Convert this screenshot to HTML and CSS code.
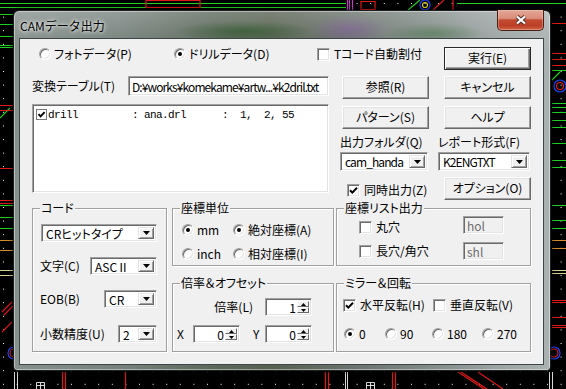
FILE: index.html
```html
<!DOCTYPE html>
<html lang="ja">
<head>
<meta charset="utf-8">
<title>CAMデータ出力</title>
<link rel="stylesheet" href="styles.css">
</head>
<body>
<div class="desktop">
  <svg class="pcb" width="566" height="389" viewBox="0 0 566 389">
    <defs>
      <pattern id="dots" width="13.6" height="13.6" patternUnits="userSpaceOnUse" x="3" y="3">
        <rect width="1" height="1" fill="#ffffff"/>
      </pattern>
    </defs>
    <rect width="566" height="389" fill="#000"/>
    <rect width="566" height="389" fill="url(#dots)"/>
    <g stroke="#22d022" stroke-width="1.2" fill="none">
      <path d="M0 3.5H346M0 7.5H346M0 14.5H13M0 24.5H13M0 36.5H13M0 45.5H13M0 47.5H13M0 205.5H13M0 217.5H13M0 228.5H13"/>
      <path d="M552 70.5H566M552 103.5H566M552 107.5H566M552 112.5H566M552 120.5H566M552 127.5H566M552 143.5H566M552 160.5H566M552 167.5H566M552 205.5H566M552 220.5H566M552 228.5H566M457 3.5H566"/>
      <path d="M408 10L420 0M0 118L10 108M552 80L560 72"/>
    </g>
    <g stroke="#e01818" stroke-width="1.2" fill="none">
      <path d="M552 23.5H566M552 53.5H566M552 59.5H566M552 65.5H566M552 300.5H566M552 302.5H566M552 317.5H566M552 325.5H566M552 327.5H566"/>
      <path d="M0 105.5H13M0 110.5H13M0 168.5H13M0 200.5H13M0 203.5H13"/>
      <path d="M146 0.5H200V7.5H146ZM433 10L444 0M453 0V10M361 1.5H375V9.5H361Z"/>
      <path d="M2 312L12 302M2 332L12 322M4 315L13 306"/>
      <path d="M62.5 372V389M65.5 372V389M125.5 372V389M325.5 372V389M328.5 372V389M392.5 372V389M395.5 372V389"/>
      <path d="M458 372L484 389M478 372L503 389M461 372L487 389"/>
    </g>
    <g stroke="#d68a2a" stroke-width="1.2"><path d="M0 240.5H13M0 250.5H13M552 240.5H566M552 248.5H566"/></g>
    <g stroke="#d8d098" stroke-width="1.2"><path d="M0 270.5H13M0 275.5H13M552 270.5H566M552 273.5H566"/></g>
    <g stroke="#c040c0" stroke-width="1.2"><path d="M347.5 0V10M349.5 0V10M352.5 0V10"/></g>
    <g fill="none" stroke-width="1.2">
      <circle cx="425" cy="5" r="5" stroke="#2244ff"/>
      <circle cx="425" cy="5" r="2.5" stroke="#e0d020"/>
      <circle cx="560" cy="86" r="6" stroke="#2244ff"/>
      <circle cx="560" cy="86" r="3.5" stroke="#e02020"/>
      <circle cx="14" cy="353" r="6" stroke="#2244ff"/>
      <circle cx="14" cy="353" r="4" stroke="#e02020"/>
      <circle cx="554" cy="353" r="6" stroke="#2244ff"/>
      <circle cx="554" cy="353" r="4" stroke="#e02020"/>
    </g>
    <g stroke="#d8d8d8" stroke-width="1" fill="none">
      <path d="M14.5 372V389M17.5 372V389M345.5 372V389M347.5 372V389M549.5 372V389M552.5 372V389"/>
      <path d="M36.5 382.5H44.5V389M36.5 382.5V389M40.5 382.5V389M36.5 385.5H44.5"/>
      <path d="M366.5 382.5H374.5V389M366.5 382.5V389M370.5 382.5V389M366.5 385.5H374.5"/>
    </g>
  </svg>

  <div class="window">
    <div class="titlebar">
      <span class="title">CAMデータ出力</span>
      <div class="close">
        <svg width="12" height="10" viewBox="0 0 12 10">
          <path d="M2 1.5L10 8.5M10 1.5L2 8.5" stroke="#5a3028" stroke-width="4.2"/>
          <path d="M2 1.5L10 8.5M10 1.5L2 8.5" stroke="#ffffff" stroke-width="2.2"/>
        </svg>
      </div>
    </div>

    <div class="client">
      <div class="upper">
        <div class="opts-top">
          <span class="opt w135"><i class="rad"></i>フォトデータ(P)</span>
          <span class="opt w143"><i class="rad on"></i>ドリルデータ(D)</span>
          <span class="opt chk-opt"><i class="chk"></i>Tコード自動割付</span>
        </div>
        <button class="btn default ml6">実行(E)</button>

        <div class="table-row">
          <span class="table-lbl">変換テーブル(T)</span>
          <div class="field sunken path"><span class="lat">D:¥works¥komekame¥artw...¥k2dril.txt</span></div>
        </div>
        <button class="btn ml2">参照(R)</button>
        <button class="btn ml6">キャンセル</button>

        <div class="list sunken">
          <div class="list-item">
            <i class="lchk"><svg width="9" height="9" viewBox="0 0 9 9"><path d="M1.5 4.2L3.6 6.4L7.6 2.2" stroke="#000" stroke-width="1.9" fill="none"/></svg></i>
            <span class="mono">drill         : ana.drl      :  1,  2, 55</span>
          </div>
        </div>

        <div class="stack">
          <button class="btn ml2 mt2">パターン(S)</button>
          <span class="cap mt6">出力フォルダ(Q)</span>
          <div class="combo tall sunken w88 mt3">
            <span class="combo-text lat">cam_handa</span>
            <span class="drop"><svg width="7" height="4" viewBox="0 0 7 4"><path d="M0 0H7L3.5 4Z" fill="#000"/></svg></span>
          </div>
          <span class="opt chk-opt ml7 mt12"><i class="chk on"><svg width="11" height="11" viewBox="0 0 11 11"><path d="M2 5.2L4.3 7.6L9 2.8" stroke="#000" stroke-width="2" fill="none"/></svg></i>同時出力(Z)</span>
        </div>

        <div class="stack">
          <button class="btn ml6 mt2">ヘルプ</button>
          <span class="cap mt6">レポート形式(F)</span>
          <div class="combo tall sunken w92 mt3">
            <span class="combo-text lat">K2ENGTXT</span>
            <span class="drop"><svg width="7" height="4" viewBox="0 0 7 4"><path d="M0 0H7L3.5 4Z" fill="#000"/></svg></span>
          </div>
          <button class="btn ml6 mt6">オプション(O)</button>
        </div>
      </div>

      <div class="lower">
        <div class="grp g-code">
          <span class="grp-title">コード</span>
          <div class="combo sunken w116 ml1">
            <span class="combo-text">CRヒットタイプ</span>
            <span class="drop"><svg width="7" height="4" viewBox="0 0 7 4"><path d="M0 0H7L3.5 4Z" fill="#000"/></svg></span>
          </div>
          <div class="crow mt15">
            <span>文字(C)</span>
            <div class="combo sunken w67">
              <span class="combo-text">ASCⅡ</span>
              <span class="drop"><svg width="7" height="4" viewBox="0 0 7 4"><path d="M0 0H7L3.5 4Z" fill="#000"/></svg></span>
            </div>
          </div>
          <div class="crow mt15">
            <span>EOB(B)</span>
            <div class="combo sunken w53">
              <span class="combo-text">CR</span>
              <span class="drop"><svg width="7" height="4" viewBox="0 0 7 4"><path d="M0 0H7L3.5 4Z" fill="#000"/></svg></span>
            </div>
          </div>
          <div class="crow mt17">
            <span>小数精度(U)</span>
            <div class="combo sunken w39">
              <span class="combo-text">2</span>
              <span class="drop"><svg width="7" height="4" viewBox="0 0 7 4"><path d="M0 0H7L3.5 4Z" fill="#000"/></svg></span>
            </div>
          </div>
        </div>

        <div class="grp g-unit">
          <span class="grp-title">座標単位</span>
          <span class="opt"><i class="rad on"></i>mm</span>
          <span class="opt"><i class="rad on"></i>絶対座標(A)</span>
          <span class="opt"><i class="rad"></i>inch</span>
          <span class="opt"><i class="rad"></i>相対座標(I)</span>
        </div>

        <div class="grp g-list">
          <span class="grp-title">座標リスト出力</span>
          <span class="opt chk-opt al-end"><i class="chk"></i>丸穴</span>
          <div class="field sunken disabled">hol</div>
          <span class="opt chk-opt al-center"><i class="chk"></i>長穴/角穴</span>
          <div class="field sunken disabled">shl</div>
        </div>

        <div class="grp g-scale">
          <span class="grp-title">倍率＆オフセット</span>
          <span class="scale-lbl">倍率(L)</span>
          <div class="spin sunken c5">
            <span class="spin-val">1</span>
            <span class="spin-btns">
              <span class="sb"><svg width="5" height="3" viewBox="0 0 5 3"><path d="M0 3H5L2.5 0Z" fill="#000"/></svg></span>
              <span class="sb"><svg width="5" height="3" viewBox="0 0 5 3"><path d="M0 0H5L2.5 3Z" fill="#000"/></svg></span>
            </span>
          </div>
          <span class="xy">X</span>
          <div class="spin sunken">
            <span class="spin-val">0</span>
            <span class="spin-btns">
              <span class="sb"><svg width="5" height="3" viewBox="0 0 5 3"><path d="M0 3H5L2.5 0Z" fill="#000"/></svg></span>
              <span class="sb"><svg width="5" height="3" viewBox="0 0 5 3"><path d="M0 0H5L2.5 3Z" fill="#000"/></svg></span>
            </span>
          </div>
          <span class="xy c4">Y</span>
          <div class="spin sunken">
            <span class="spin-val">0</span>
            <span class="spin-btns">
              <span class="sb"><svg width="5" height="3" viewBox="0 0 5 3"><path d="M0 3H5L2.5 0Z" fill="#000"/></svg></span>
              <span class="sb"><svg width="5" height="3" viewBox="0 0 5 3"><path d="M0 0H5L2.5 3Z" fill="#000"/></svg></span>
            </span>
          </div>
        </div>

        <div class="grp g-mirror">
          <span class="grp-title">ミラー＆回転</span>
          <div class="mrow">
            <span class="opt chk-opt w90"><i class="chk on"><svg width="11" height="11" viewBox="0 0 11 11"><path d="M2 5.2L4.3 7.6L9 2.8" stroke="#000" stroke-width="2" fill="none"/></svg></i>水平反転(H)</span>
            <span class="opt chk-opt"><i class="chk"></i>垂直反転(V)</span>
          </div>
          <div class="mrow rot">
            <span class="opt w41"><i class="rad on"></i>0</span>
            <span class="opt w47"><i class="rad"></i>90</span>
            <span class="opt w50"><i class="rad"></i>180</span>
            <span class="opt"><i class="rad"></i>270</span>
          </div>
        </div>
      </div>
    </div>
  </div>
</div>
</body>
</html>
```

FILE: styles.css
```css
* { box-sizing: border-box; }
html, body { margin: 0; padding: 0; }
body {
  width: 566px;
  height: 389px;
  overflow: hidden;
  background: #000;
  font-family: "Noto Sans CJK JP", "Noto Sans", sans-serif;
  font-size: 12px;
  line-height: 14px;
  color: #000;
}
.desktop { position: relative; width: 566px; height: 389px; }
.pcb { position: absolute; left: 0; top: 0; display: block; }

/* ---------- window frame ---------- */
.window {
  position: absolute;
  left: 13px;
  top: 10px;
  width: 538px;
  height: 361px;
  display: flex;
  flex-direction: column;
  padding: 0 6px 5px 5px;
  border: 1px solid #1a1f1f;
  border-radius: 6px 6px 4px 4px;
  box-shadow: inset 0 0 0 1px rgba(255,255,255,.42), 0 0 5px rgba(0,0,0,.7);
  background:
    linear-gradient(180deg, rgba(255,255,255,.22) 0, rgba(255,255,255,.06) 26px, rgba(255,255,255,0) 40px),
    radial-gradient(ellipse 70px 10px at 230px 20px, rgba(20,70,20,.65), rgba(20,70,20,0)),
    radial-gradient(ellipse 40px 14px at 335px 18px, rgba(120,70,150,.5), rgba(120,70,150,0)),
    radial-gradient(ellipse 50px 10px at 420px 22px, rgba(40,100,40,.45), rgba(40,100,40,0)),
    linear-gradient(90deg, #86908c 0%, #76817c 20%, #5b6759 38%, #56614f 48%, #68716b 62%, #7e8884 76%, #9ba3a3 90%, #aab1b1 100%);
}
.titlebar {
  flex: none;
  height: 27px;
  display: flex;
  align-items: flex-start;
}
.title {
  margin: 8px 0 0 1px;
  color: #000;
  text-shadow: 0 0 5px #fff, 0 0 3px rgba(255,255,255,.85);
}
.close {
  margin: -1px 0 0 auto;
  width: 47px;
  height: 21px;
  display: flex;
  align-items: center;
  justify-content: center;
  border: 1px solid #4a1d15;
  border-top: none;
  border-radius: 0 0 5px 5px;
  box-shadow: inset 0 0 0 1px rgba(255,220,210,.35);
  background: linear-gradient(180deg, #e4a796 0%, #d98d79 42%, #c34a31 50%, #bb3f27 78%, #cf6548 100%);
}
.close svg { display: block; }

/* ---------- client ---------- */
.client {
  flex: 1;
  background: #f0f0f0;
  border: 1px solid #3d4747;
  padding: 8px 0 0 12px;
  font-feature-settings: "palt";
}

.upper {
  display: grid;
  grid-template-columns: 308px 98px 93px;
  grid-template-rows: 29px 28px auto;
  align-items: start;
}
.opts-top {
  grid-column: 1 / 3;
  display: flex;
  padding-left: 7px;
}

.opt {
  display: inline-flex;
  align-items: center;
  gap: 3px;
  height: 14px;
  white-space: nowrap;
}
.chk-opt { gap: 4px; }
.w135 { width: 135px; }
.w143 { width: 143px; }
.w90 { width: 90px; }
.w41 { width: 41px; }
.w47 { width: 47px; }
.w50 { width: 50px; }

/* radio */
.rad {
  flex: none;
  display: inline-grid;
  place-items: center;
  width: 12px;
  height: 12px;
  border-radius: 50%;
  background: #fff;
  border: 1px solid;
  border-color: #a0a0a0 #ffffff #ffffff #a0a0a0;
  box-shadow: inset 1px 1px 0 #6a6a6a, inset -1px -1px 0 #e3e3e3;
}
.rad.on::after {
  content: "";
  width: 4px;
  height: 4px;
  border-radius: 50%;
  background: #000;
}

/* checkbox */
.chk {
  flex: none;
  display: block;
  width: 13px;
  height: 13px;
  background: #fff;
  border: 1px solid;
  border-color: #a0a0a0 #ffffff #ffffff #a0a0a0;
  box-shadow: inset 1px 1px 0 #6a6a6a, inset -1px -1px 0 #e3e3e3;
}
.chk svg { display: block; }

/* buttons */
.btn {
  display: flex;
  align-items: center;
  justify-content: center;
  width: 87px;
  height: 23px;
  padding: 0 0 1px;
  font: inherit;
  color: #000;
  background: #f0f0f0;
  border: 1px solid;
  border-color: #ffffff #6a6a6a #6a6a6a #ffffff;
  box-shadow: inset -1px -1px 0 #a0a0a0, inset 1px 1px 0 #e3e3e3;
}
.btn.default {
  border-color: #2a2a2a;
  box-shadow: inset 1px 1px 0 #fff, inset -1px -1px 0 #6a6a6a, inset -2px -2px 0 #a0a0a0;
}

/* spacing utilities (after components so they win) */
.ml1 { margin-left: 1px; }
.ml2 { margin-left: 2px; }
.ml6 { margin-left: 6px; }
.ml7 { margin-left: 7px; }
.mt2 { margin-top: 2px; }
.mt3 { margin-top: 3px; }
.mt5 { margin-top: 5px; }
.mt6 { margin-top: 6px; }
.mt12 { margin-top: 12px; }
.mt15 { margin-top: 15px; }
.mt17 { margin-top: 17px; }

/* sunken fields */
.sunken {
  background: #fff;
  border: 1px solid;
  border-color: #a0a0a0 #ffffff #ffffff #a0a0a0;
  box-shadow: inset 1px 1px 0 #6a6a6a, inset -1px -1px 0 #e3e3e3;
}
.table-row {
  display: flex;
  align-items: center;
  height: 20px;
}
.table-lbl { width: 96px; }
.field {
  height: 20px;
  padding: 3px 0 0 3px;
  white-space: nowrap;
  overflow: hidden;
}
.path { width: 201px; }
.lat { letter-spacing: -0.9px; }
.field.disabled {
  height: 18px;
  padding: 2px 0 0 3px;
  background: #f0f0f0;
  color: #6d6d6d;
}

.list {
  width: 297px;
  height: 89px;
  padding: 3px 0 0 3px;
}
.list-item {
  display: flex;
  align-items: center;
  gap: 1px;
  height: 13px;
}
.lchk {
  display: grid;
  place-items: center;
  width: 11px;
  height: 11px;
  border: 1px solid #7a7a7a;
  background: #fff;
}
.lchk svg { display: block; }
.mono {
  font-family: "Liberation Mono", "DejaVu Sans Mono", monospace;
  font-size: 11px;
  letter-spacing: -0.6px;
  white-space: pre;
  font-feature-settings: normal;
}

.stack { display: flex; flex-direction: column; align-items: flex-start; }
.cap { display: block; white-space: nowrap; }

/* combos */
.combo {
  display: flex;
  align-items: stretch;
  height: 18px;
  padding: 2px;
}
.combo.tall { height: 19px; }
.w88 { width: 88px; }
.w92 { width: 92px; }
.w116 { width: 116px; }
.w67 { width: 67px; }
.w53 { width: 53px; }
.w39 { width: 39px; }
.combo-text {
  flex: 1;
  padding-left: 2px;
  line-height: 14px;
  white-space: nowrap;
}
.drop {
  flex: none;
  width: 16px;
  display: flex;
  align-items: center;
  justify-content: center;
  background: #f0f0f0;
  border: 1px solid;
  border-color: #e3e3e3 #6a6a6a #6a6a6a #e3e3e3;
  box-shadow: inset 1px 1px 0 #fff, inset -1px -1px 0 #a0a0a0;
}
.drop svg { display: block; }

/* lower groups */
.lower {
  display: grid;
  grid-template-columns: 140px 164px 195px;
  grid-template-rows: 58px 69px;
  row-gap: 17px;
  margin-top: 8px;
}
.grp {
  position: relative;
  border: 1px solid #a0a0a0;
  box-shadow: inset 1px 1px 0 #fff, 1px 1px 0 #fff;
}
.grp-title {
  position: absolute;
  top: -8px;
  left: 7px;
  padding: 0 1px;
  background: #f0f0f0;
  line-height: 14px;
  white-space: nowrap;
}
.g-code {
  grid-row: 1 / 3;
  grid-column: 1;
  width: 135px;
  padding: 15px 9px 0 7px;
}
.crow {
  display: flex;
  align-items: center;
  justify-content: space-between;
  height: 18px;
}
.g-unit {
  grid-row: 1;
  grid-column: 2;
  width: 162px;
  display: grid;
  grid-template-columns: 51px auto;
  grid-auto-rows: 14px;
  row-gap: 10px;
  align-content: start;
  padding: 14px 0 0 9px;
}
.g-scale {
  grid-row: 2;
  grid-column: 2;
  width: 162px;
  display: grid;
  grid-template-columns: 16px 47px 13px 12px 47px;
  grid-template-rows: 18px 18px;
  row-gap: 9px;
  align-items: center;
  align-content: start;
  padding: 14px 0 0 4px;
}
.scale-lbl { grid-column: 1 / 4; justify-self: end; }
.c5 { grid-column: 5; }
.c4 { grid-column: 4; }
.spin {
  display: flex;
  width: 47px;
  height: 18px;
  padding: 2px;
}
.spin-val {
  flex: 1;
  text-align: right;
  padding-right: 1px;
  line-height: 14px;
}
.spin-btns {
  flex: none;
  width: 12px;
  display: flex;
  flex-direction: column;
}
.sb {
  flex: 1;
  display: flex;
  align-items: center;
  justify-content: center;
  background: #f0f0f0;
  border: 1px solid;
  border-color: #fff #6a6a6a #6a6a6a #fff;
}
.sb svg { display: block; }

.g-list {
  grid-row: 1;
  grid-column: 3;
  width: 195px;
  display: grid;
  grid-template-columns: 104px 41px;
  grid-template-rows: 18px 18px;
  row-gap: 8px;
  align-content: start;
  padding: 7px 0 0 22px;
}
.al-end { align-self: end; }
.al-center { align-self: center; }

.g-mirror {
  grid-row: 2;
  grid-column: 3;
  width: 195px;
  padding: 14px 0 0 6px;
}
.mrow { display: flex; height: 14px; }
.mrow.rot { margin-top: 15px; margin-left: 1px; }
```
